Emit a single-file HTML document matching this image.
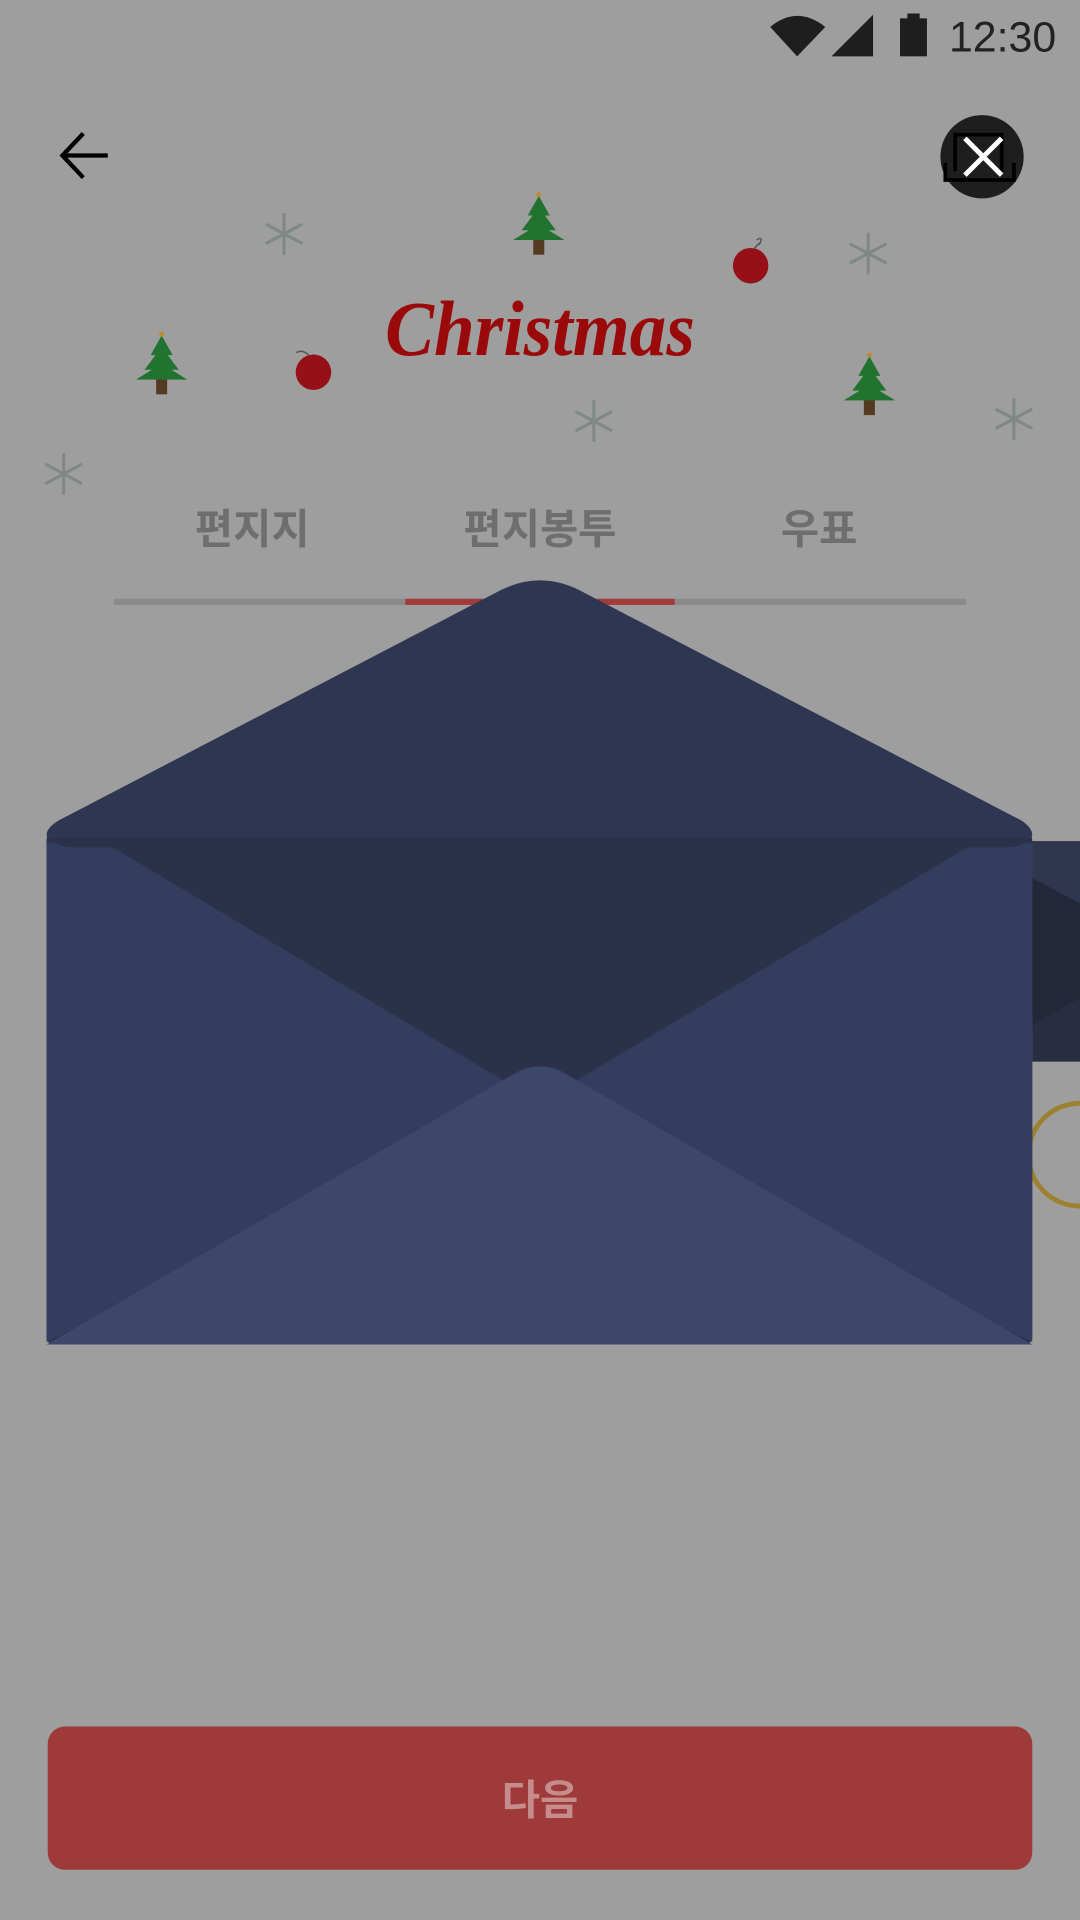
<!DOCTYPE html>
<html><head><meta charset="utf-8"><style>
html,body{margin:0;padding:0;background:#9e9e9e;}
svg{display:block}
</style></head><body>
<svg width="1080" height="1920" viewBox="0 0 882 1568" xmlns="http://www.w3.org/2000/svg">
<rect width="882" height="1568" fill="#9e9e9e"/>
<!-- status bar -->
<path d="M629,22 Q651,4 674,22 L651,46 Z" fill="#1e1e1e"/>
<path d="M679,46 L713,12 L713,46 Z" fill="#1e1e1e"/>
<rect x="735" y="15" width="22" height="31" fill="#1e1e1e"/>
<rect x="741" y="11" width="10" height="5" fill="#1e1e1e"/>
<text x="775" y="42" font-family="Liberation Sans, sans-serif" font-size="35" fill="#222">12:30</text>
<!-- back arrow -->
<path d="M88,127 L51,127 M68,109 L51,127 L68,145" stroke="#000" stroke-width="3.5" fill="none"/>
<!-- close -->
<circle cx="802" cy="128" r="34" fill="#1e1e1e"/>
<path d="M772,133 L772,147 L828,147 L828,133 M780,140 L780,110 L818,110 L818,140" stroke="#000" stroke-width="3" fill="none"/>
<path d="M788,113 L818,143 M818,113 L788,143" stroke="#fff" stroke-width="4"/>
<!-- snowflakes -->
<g stroke="#7f8787" stroke-width="2.5" fill="none">
<g transform="translate(232,191)"><path d="M0,-17V17M-15,-8L15,8M-15,8L15,-8"/></g>
<g transform="translate(709,207)"><path d="M0,-17V17M-15,-8L15,8M-15,8L15,-8"/></g>
<g transform="translate(485,344)"><path d="M0,-17V17M-15,-8L15,8M-15,8L15,-8"/></g>
<g transform="translate(828,342)"><path d="M0,-17V17M-15,-8L15,8M-15,8L15,-8"/></g>
<g transform="translate(52,387)"><path d="M0,-17V17M-15,-8L15,8M-15,8L15,-8"/></g>
</g>
<!-- trees -->
<defs><g id="tree">
<rect x="-4.5" y="36" width="9" height="14" fill="#553a22"/>
<path d="M0,2 L-9,18 L-5,18 L-14,30 L-8,30 L-21,38 L21,38 L8,30 L14,30 L5,18 L9,18 Z" fill="#21732f"/>
<circle cx="0" cy="1" r="2" fill="#c08a2a"/>
</g></defs>
<use href="#tree" x="440" y="158"/>
<use href="#tree" x="132" y="272"/>
<use href="#tree" x="710" y="289"/>
<!-- ornaments -->
<circle cx="613" cy="217" r="14.5" fill="#961018"/>
<path d="M616,203 Q622,196 620,200 Q624,192 618,196" stroke="#555" stroke-width="1.2" fill="none"/>
<circle cx="256" cy="304" r="14.5" fill="#961018"/>
<path d="M252,290 Q247,285 242,288" stroke="#555" stroke-width="1.2" fill="none"/>
<!-- Christmas -->
<text x="441" y="290" text-anchor="middle" font-family="Liberation Serif, serif" font-style="italic" font-weight="bold" font-size="64" fill="#9b0a0a" textLength="253" lengthAdjust="spacingAndGlyphs">Christmas</text>
<!-- tabs -->
<g font-family="Liberation Sans, 'Noto Sans CJK KR', sans-serif" font-weight="bold" font-size="34" fill="#6e6e6e" text-anchor="middle">
<text x="206" y="444">편지지</text>
<text x="441" y="444">편지봉투</text>
<text x="669" y="444">우표</text>
</g>
<rect x="93" y="489" width="696" height="5" fill="#8a8a8a"/>
<rect x="331" y="489" width="220" height="5" fill="#a33a3a"/>
<!-- right partial envelope -->
<rect x="843" y="687" width="39" height="180" fill="#282d42"/>
<rect x="843" y="687" width="39" height="52" fill="#30364f"/>
<path d="M843,717 L882,738 L882,815 L843,837 Z" fill="#222739"/>
<circle cx="882" cy="943" r="42" stroke="#9c8230" stroke-width="4" fill="none"/>
<!-- envelope -->
<rect x="38" y="680" width="805" height="418" rx="6" fill="#2b3149"/>
<path d="M38,688 L38,1096 L441,900 L92,692 Q84,689 70,690 Z" fill="#333d5e"/>
<path d="M843,688 L843,1096 L441,900 L790,692 Q798,689 812,690 Z" fill="#333d5e"/>
<path d="M38,1098 L418,878 Q441,864 464,878 L843,1098 Z" fill="#3d4769"/>
<path d="M38,682 Q38,676 48,670 L405,484 Q441,464 477,484 L834,670 Q843,676 843,682 Q840,691 820,692 L60,692 Q40,691 38,682 Z" fill="#2e3652"/>
<path d="M40,684 L843,684 Q840,691 820,692 L60,692 Q44,691 40,684 Z" fill="#2b3149"/>
<!-- button -->
<rect x="39" y="1410" width="804" height="117" rx="14" fill="#9e3a3a"/>
<text x="441" y="1482" text-anchor="middle" font-family="Liberation Sans, 'Noto Sans CJK KR', sans-serif" font-weight="bold" font-size="34" fill="#c68c8c">다음</text>
</svg>
</body></html>
